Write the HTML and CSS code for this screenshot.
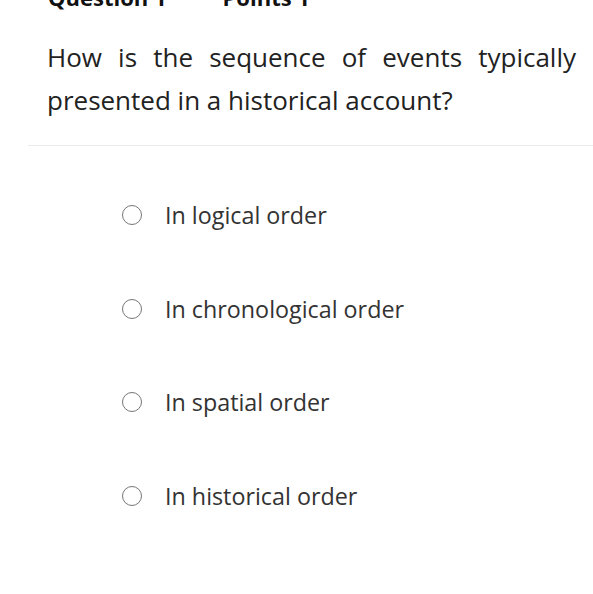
FILE: index.html
```html
<!DOCTYPE html>
<html>
<head>
<meta charset="utf-8">
<link rel="stylesheet" href="styles.css">
</head>
<body>
<div class="header">
  <span class="h-question">Question 1</span>
  <span class="h-points">Points 1</span>
</div>
<p class="question">How is the sequence of events typically presented in a historical account?</p>
<div class="divider"></div>
<ul class="options">
  <li class="option"><span class="radio"></span><span class="label">In logical order</span></li>
  <li class="option"><span class="radio"></span><span class="label">In chronological order</span></li>
  <li class="option"><span class="radio"></span><span class="label">In spatial order</span></li>
  <li class="option"><span class="radio"></span><span class="label">In historical order</span></li>
</ul>
</body>
</html>
```
FILE: styles.css
```css
html, body {
  margin: 0;
  padding: 0;
  background: #fff;
  overflow: hidden;
}
body {
  font-family: "Open Sans", "Liberation Sans", sans-serif;
  color: #222;
  width: 593px;
  height: 594px;
}
.header {
  margin-top: -18px;
  height: 30px;
  line-height: 30px;
  padding-left: 48px;
  display: flex;
  gap: 56px;
  font-size: 22px;
  font-weight: 700;
  color: #111;
}
.question {
  margin: 24px 0 0 0;
  padding: 0 17px 0 47px;
  font-size: 26px;
  line-height: 43px;
  text-align: justify;
  color: #222;
}
.divider {
  margin-top: 23px;
  margin-left: 28px;
  height: 1px;
  background: #ececec;
}
.options {
  list-style: none;
  margin: 22px 0 0 0;
  padding: 0 0 0 122px;
}
.option {
  height: 93.7px;
  display: flex;
  align-items: center;
  gap: 23px;
}
.radio {
  width: 18px;
  height: 18px;
  border: 1.5px solid #767676;
  border-radius: 50%;
  flex: none;
}
.label {
  font-size: 23.3px;
  color: #333;
}
```
